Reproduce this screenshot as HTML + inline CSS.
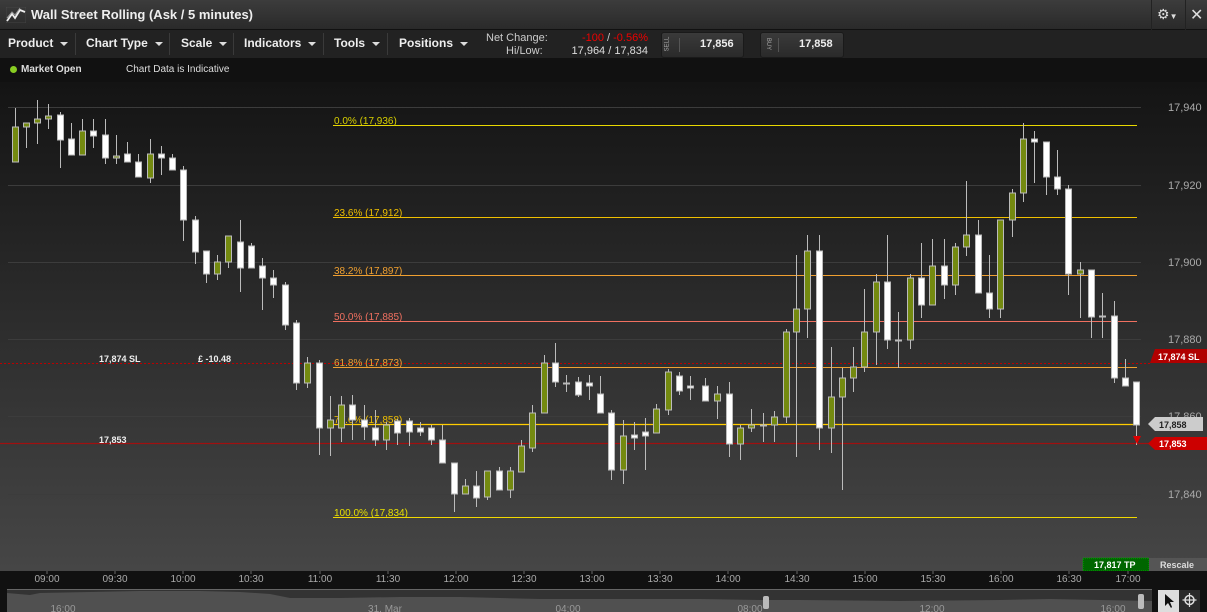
<!DOCTYPE html>
<html><head><meta charset="utf-8"><style>
*{margin:0;padding:0;box-sizing:border-box}
body{width:1207px;height:612px;overflow:hidden;background:#111;font-family:"Liberation Sans",Arial,sans-serif;position:relative;color:#ddd}
.abs{position:absolute}
#title{left:0;top:0;width:1207px;height:30px;background:linear-gradient(#3c3c3c,#2a2a2a);border-bottom:1px solid #111}
#tb{left:0;top:30px;width:1207px;height:28px;background:#222}
.menu{position:absolute;top:6px;font-size:12px;font-weight:bold;color:#eee}
.menu:after{content:"";display:inline-block;margin-left:7px;border-left:4px solid transparent;border-right:4px solid transparent;border-top:4px solid #ddd;vertical-align:middle}
.sep{position:absolute;top:3px;width:1px;height:22px;background:#3a3a3a}
.btn{position:absolute;top:32px;height:26px;background:linear-gradient(#3a3a3a,#2a2a2a);border:1px solid #1a1a1a;border-radius:3px}
</style></head><body>
<div id="title" class="abs">
 <svg class="abs" style="left:6px;top:7px" width="20" height="16"><rect x="0" y="0" width="20" height="16" fill="none" stroke="#555" stroke-width="0.5"/><path d="M1 14 L6 7 L9 11 L14 3 L19 5" stroke="#eee" fill="none" stroke-width="1.8"/><path d="M1 11 L6 5 L9 8 L14 1" stroke="#999" fill="none" stroke-width="1"/></svg>
 <div class="abs" style="left:31px;top:7px;font-size:13px;font-weight:bold;color:#eee">Wall Street Rolling (Ask / 5 minutes)</div>
 <div class="abs" style="left:1151px;top:0;width:1px;height:30px;background:#222"></div>
 <div class="abs" style="left:1157px;top:6px;font-size:14px;color:#ddd">⚙<span style="font-size:8px">▼</span></div>
 <div class="abs" style="left:1185px;top:0;width:1px;height:30px;background:#222"></div>
 <div class="abs" style="left:1190px;top:5px;font-size:16px;color:#ddd">✕</div>
</div>
<div id="tb" class="abs">
 <div class="menu" style="left:8px">Product</div><div class="sep" style="left:75px"></div>
 <div class="menu" style="left:86px">Chart Type</div><div class="sep" style="left:169px"></div>
 <div class="menu" style="left:181px">Scale</div><div class="sep" style="left:233px"></div>
 <div class="menu" style="left:244px">Indicators</div><div class="sep" style="left:323px"></div>
 <div class="menu" style="left:334px">Tools</div><div class="sep" style="left:387px"></div>
 <div class="menu" style="left:399px">Positions</div>
 <div class="abs" style="left:486px;top:2px;font-size:11px;color:#ccc">Net Change:</div>
 <div class="abs" style="left:506px;top:15px;font-size:11px;color:#ccc">Hi/Low:</div>
 <div class="abs" style="left:555px;top:2px;width:93px;text-align:right;font-size:11px;color:#e00">-100 <span style="color:#ccc">/</span> -0.56%</div>
 <div class="abs" style="left:555px;top:15px;width:93px;text-align:right;font-size:11px;color:#ddd">17,964 / 17,834</div>
</div>
<div class="btn" style="left:661px;width:83px"><div class="abs" style="left:-2px;top:8px;font-size:6px;color:#aaa;transform:rotate(-90deg)">SELL</div><div class="abs" style="left:17px;top:5px;width:1px;height:14px;background:#555"></div><div class="abs" style="left:38px;top:5px;font-size:11px;font-weight:bold;color:#eee">17,856</div></div>
<div class="btn" style="left:760px;width:84px"><div class="abs" style="left:1px;top:8px;font-size:6px;color:#aaa;transform:rotate(90deg)">BUY</div><div class="abs" style="left:17px;top:5px;width:1px;height:14px;background:#555"></div><div class="abs" style="left:38px;top:5px;font-size:11px;font-weight:bold;color:#eee">17,858</div></div>
<div class="abs" style="left:0;top:58px;width:1207px;height:24px;background:#111">
 <div class="abs" style="left:10px;top:8px;width:7px;height:7px;border-radius:50%;background:#8c2"></div>
 <div class="abs" style="left:21px;top:6px;font-size:10px;font-weight:bold;color:#ddd">Market Open</div>
 <div class="abs" style="left:126px;top:6px;font-size:10px;color:#ddd">Chart Data is Indicative</div>
</div>
<svg class="abs" style="left:0;top:0" width="1207" height="612" id="ch">
<defs><linearGradient id="bg" x1="0" y1="0" x2="0" y2="1"><stop offset="0" stop-color="#141414"/><stop offset="1" stop-color="#464646"/></linearGradient></defs>
<rect x="0" y="82" width="1207" height="489" fill="url(#bg)"/>
<g stroke="#3c3c3c" stroke-width="1">
<line x1="8" x2="1141" y1="107.5" y2="107.5"/><line x1="8" x2="1141" y1="185.5" y2="185.5"/><line x1="8" x2="1141" y1="262.5" y2="262.5"/><line x1="8" x2="1141" y1="339.5" y2="339.5"/><line x1="8" x2="1141" y1="416.5" y2="416.5"/><line x1="8" x2="1141" y1="494.5" y2="494.5"/>
</g>
<g font-size="11" fill="#aaa" font-family="Liberation Sans">
<text x="1168" y="111">17,940</text><text x="1168" y="189">17,920</text><text x="1168" y="266">17,900</text><text x="1168" y="343">17,880</text><text x="1168" y="420">17,860</text><text x="1168" y="498">17,840</text>
</g>
<g id="fib" font-size="10" font-family="Liberation Sans">
<line x1="333" x2="1137" y1="125.5" y2="125.5" stroke="#e8d800"/><text x="334" y="124" fill="#d8d000">0.0% (17,936)</text>
<line x1="333" x2="1137" y1="217.5" y2="217.5" stroke="#f0c000"/><text x="334" y="216" fill="#f0c000">23.6% (17,912)</text>
<line x1="333" x2="1137" y1="275.5" y2="275.5" stroke="#f0a030"/><text x="334" y="274" fill="#f0a030">38.2% (17,897)</text>
<line x1="333" x2="1137" y1="321.5" y2="321.5" stroke="#f07060"/><text x="334" y="320" fill="#f07060">50.0% (17,885)</text>
<line x1="0" x2="1150" y1="363.5" y2="363.5" stroke="#b00" stroke-dasharray="2,2"/>
<line x1="333" x2="1137" y1="367.5" y2="367.5" stroke="#f0a030"/><text x="334" y="366" fill="#f0a030">61.8% (17,873)</text>
<line x1="0" x2="1150" y1="443.5" y2="443.5" stroke="#a01010" stroke-width="1.2"/>
<line x1="333" x2="1137" y1="424.5" y2="424.5" stroke="#ffcc00" stroke-width="1.3"/><text x="334" y="423" fill="#f0c000">78.6% (17,858)</text>
<line x1="333" x2="1137" y1="517.5" y2="517.5" stroke="#f0d800"/><text x="334" y="516" fill="#e8e000">100.0% (17,834)</text>
</g>
<g id="candles"></g>
<g font-size="9" font-weight="bold" fill="#eee" font-family="Liberation Sans">
<text x="99" y="362">17,874 SL</text><text x="198" y="362">£ -10.48</text><text x="99" y="443">17,853</text>
</g>
<polygon points="1133,436 1141,436 1137,444" fill="#d00"/>
<polygon points="1155,349 1207,349 1207,363 1150,363" fill="#b00000"/><text x="1158" y="360" font-size="9" font-weight="bold" fill="#fff" font-family="Liberation Sans">17,874 SL</text>
<polygon points="1155,417 1203,417 1203,431 1155,431 1148,424" fill="#ccc"/><text x="1159" y="428" font-size="9" font-weight="bold" fill="#222" font-family="Liberation Sans">17,858</text>
<polygon points="1155,437 1207,437 1207,450 1155,450 1148,443.5" fill="#cc0000"/><text x="1159" y="447" font-size="9" font-weight="bold" fill="#fff" font-family="Liberation Sans">17,853</text>
<rect x="1083" y="558" width="66" height="13" fill="#006600" stroke="#0a0" stroke-dasharray="1,1"/><text x="1094" y="568" font-size="9" font-weight="bold" fill="#fff" font-family="Liberation Sans">17,817 TP</text>
<rect x="1149" y="558" width="58" height="13" fill="#555"/><text x="1160" y="568" font-size="9" font-weight="bold" fill="#ddd" font-family="Liberation Sans">Rescale</text>
<rect x="0" y="571" width="1207" height="19" fill="#111"/>
<g id="times" font-size="10" fill="#aaa" font-family="Liberation Sans" text-anchor="middle"></g>
<rect x="7" y="589" width="1145" height="23" fill="#333"/>
<path d="M7 593 L30 595 L40 593 L90 592 L140 591 L200 591 L240 592 L270 594 L290 598 L340 598 L400 597 L460 597 L500 598 L540 599 L600 599 L700 599 L760 600 L800 600 L900 601 L1000 600 L1050 599 L1100 600 L1152 601 L1152 612 L7 612Z" fill="#505050"/>
<line x1="7" x2="1152" y1="589.5" y2="589.5" stroke="#666"/>
<g font-size="10" fill="#999" font-family="Liberation Sans" text-anchor="middle">
<text x="63" y="612">16:00</text><text x="385" y="612">31. Mar</text><text x="568" y="612">04:00</text><text x="750" y="612">08:00</text><text x="932" y="612">12:00</text><text x="1113" y="612">16:00</text></g>
<rect x="763" y="596" width="6" height="13" rx="2" fill="#bbb"/><rect x="1138" y="594" width="6" height="15" rx="2" fill="#bbb"/>
<rect x="1158" y="590" width="21" height="22" fill="#ddd"/><path d="M1165 594 L1165 606 L1168 603 L1171 608 L1172 607 L1170 602 L1174 602Z" fill="#111"/>
<rect x="1179" y="590" width="21" height="22" fill="#2a2a2a"/><circle cx="1189.5" cy="600" r="4.5" stroke="#ddd" fill="none" stroke-width="1.5"/><path d="M1189.5 593 V607 M1182.5 600 H1196.5" stroke="#ddd" stroke-width="1.2"/>
</svg>
<script>
var L=[["g",127,162,108,162],["g",123,127,123,148],["g",119,123,100,144],["g",116,119,104,129],["w",115,140,112,168],["w",139,155,123,155],["g",131,155,119,155],["w",131,136,119,148],["w",135,158,119,164],["g",156,158,135,164],["w",154,162,142,162],["w",162,177,154,177],["g",154,178,139,183],["w",154,158,146,175],["w",158,170,154,170],["w",170,220,166,241],["w",220,252,216,264],["w",251,274,251,283],["g",262,274,255,280],["g",236,262,236,268],["w",242,268,220,292],["w",246,268,243,268],["w",266,278,258,310],["w",278,285,270,298],["w",285,325,282,330],["w",323,383,320,390],["g",363,383,357,388],["w",363,428,360,455],["g",420,428,396,456],["g",405,428,396,442],["w",405,420,395,440],["w",420,427,405,440],["w",428,440,410,446],["g",425,440,422,450],["w",421,433,419,445],["w",421,432,418,446],["w",428,432,422,436],["w",428,440,425,445],["w",440,463,425,463],["w",463,494,463,512],["g",486,494,479,494],["w",486,498,471,507],["g",471,497,471,500],["w",471,490,467,490],["g",471,490,467,498],["g",446,472,440,472],["g",413,448,405,452],["g",363,413,355,413],["w",363,382,343,387],["w",383,384,375,392],["w",382,395,377,397],["w",383,386,375,400],["w",394,413,376,413],["w",413,470,410,480],["g",436,470,420,484],["w",435,438,422,450],["w",432,436,418,470],["g",409,433,404,433],["g",372,410,369,415],["w",376,391,372,395],["w",386,388,376,400]];
var R=[[705,"w",386,401,378,401],[717,"g",394,401,386,419],[729,"w",394,444,382,457],[740,"g",428,444,425,460],[751,"g",425,428,409,432],[763,"w",425,426,413,442],[774,"g",417,425,411,442],[785.5,"g",332,417,329,423],[796,"g",309,332,255,457],[807,"g",251,309,235,338],[819,"w",251,428,235,450],[831,"g",397,428,347,453],[842,"g",378,397,368,490],[853,"g",367,378,347,392],[864,"g",332,367,289,372],[876,"g",282,332,274,365],[887,"w",282,340,235,349],[898,"w",340,341,312,368],[910,"g",278,340,274,349],[921,"w",278,305,243,318],[932,"g",266,305,239,305],[944,"w",266,285,239,299],[955,"g",247,285,243,295],[966,"g",235,247,181,256],[978,"w",235,293,220,293],[989,"w",293,309,255,318],[1000,"g",220,309,220,318],[1012,"g",193,220,189,237],[1023,"g",139,193,123,202],[1034,"w",139,142,131,183],[1046,"w",142,177,142,195],[1057,"w",177,189,150,195],[1068,"w",189,274,185,295],[1080,"g",270,274,262,318],[1091,"w",270,317,270,338],[1102,"w",316,317,293,338],[1114,"w",316,378,301,383],[1125,"w",378,386,359,386],[1136,"w",382,425,382,445]];
var s="";
function c(x,t,top,bot,wt,wb){var g=t=="g";s+='<line x1="'+x+'" x2="'+x+'" y1="'+wt+'" y2="'+wb+'" stroke="#bbb" stroke-width="1"/>';var h=Math.max(bot-top,1);s+='<rect x="'+(x-3)+'" y="'+top+'" width="6" height="'+h+'" fill="'+(g?"#748a10":"#fff")+'" stroke="#bbb" stroke-width="1"/>';}
L.forEach(function(d,i){c(Math.round(14.5+i*11.26)+0.5,d[0],d[1],d[2],d[3],d[4]);});
R.forEach(function(d){c(Math.round(d[0])+0.5,d[1],d[2],d[3],d[4],d[5]);});
document.getElementById("candles").innerHTML=s;
var T=[["09:00",47],["09:30",115],["10:00",183],["10:30",251],["11:00",320],["11:30",388],["12:00",456],["12:30",524],["13:00",592],["13:30",660],["14:00",728],["14:30",797],["15:00",865],["15:30",933],["16:00",1001],["16:30",1069],["17:00",1128]],u="";
T.forEach(function(t){u+='<line x1="'+t[1]+'" x2="'+t[1]+'" y1="571" y2="574" stroke="#666"/><text x="'+t[1]+'" y="582">'+t[0]+'</text>';});
document.getElementById("times").innerHTML=u;
</script>
</body></html>
